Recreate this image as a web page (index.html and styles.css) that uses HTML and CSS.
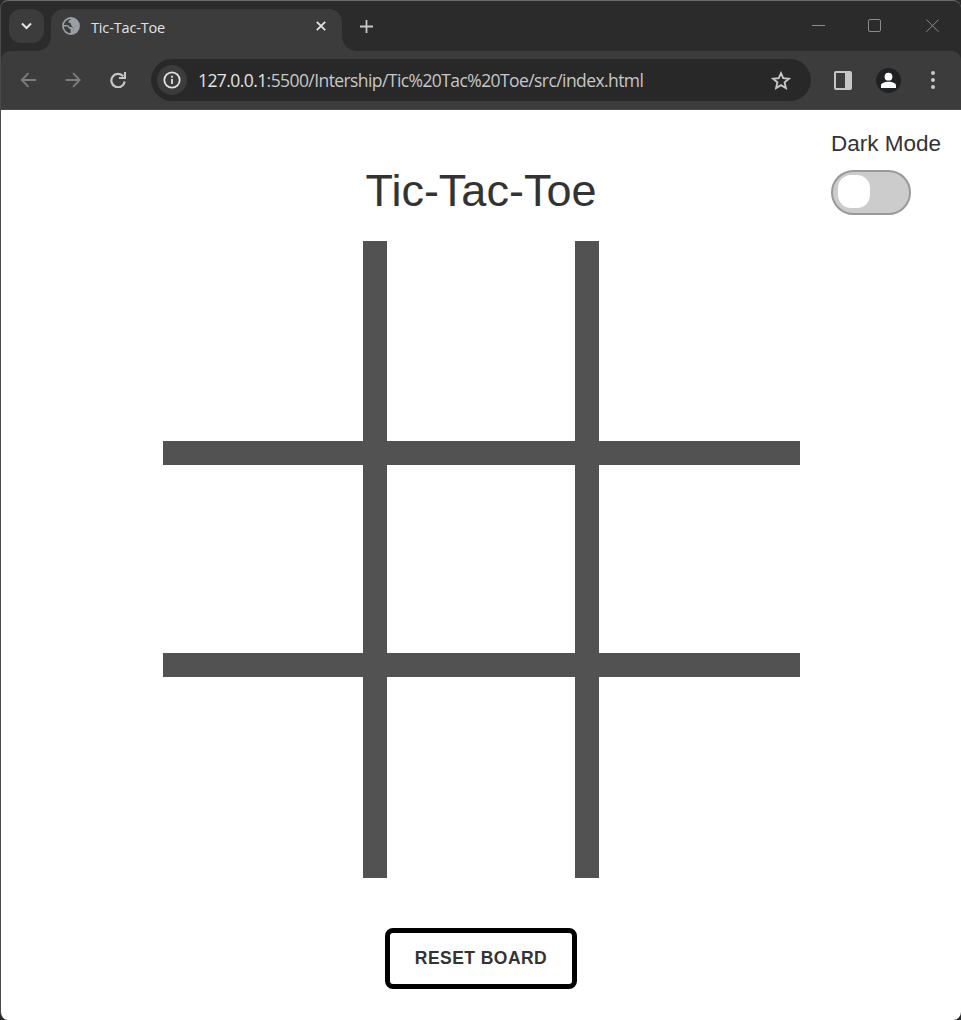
FILE: index.html
```html
<!DOCTYPE html>
<html lang="en">
<head>
<meta charset="utf-8">
<title>Tic-Tac-Toe</title>
<link rel="stylesheet" href="styles.css">
</head>
<body>
<div class="window">
  <header class="tabs">
    <button class="tab-search" aria-label="Search tabs"><svg width="11" height="8" viewBox="0 0 11 8"><path d="M1 1.500 5.500 6 10 1.500" fill="none" stroke="#e3e3e3" stroke-width="2"/></svg></button>
    <div class="tab">
      <svg class="globe" width="18" height="18" viewBox="0 0 18 18"><circle cx="9" cy="9" r="8.900" fill="#9aa0a6"/><path d="M10 2C7.500 2.300 6 3.800 6.500 5.800c1.300 0 2.500.2 2.700 2.200.4 2 2.300 2.700 4.300 1.700h2.600c-.1 3.500-2.600 6-5.800 6.400v-1.900c1.300-.4 2-1.500 1.300-2.700-.7-1.200-2-1.400-4-1.400-.3-1.300-1.100-2-2.700-2H2C2.300 4.200 5.700 1.500 10 2Z" fill="#3c3c3c"/><path d="M10.500 9.500h6v3.200l-4 3.500-3 .2v-2c2-.3 2.800-1.700 2-3Z" fill="#9aa0a6"/><path d="M1.900 9.500h4c.2 1.700 1 2.300 2.700 2.600v4C5 15.900 2 13.200 1.900 9.500Z" fill="#3c3c3c"/></svg>
      <span class="tab-title">Tic-Tac-Toe</span>
      <svg class="tab-close" width="10" height="10" viewBox="0 0 10 10"><path d="m.8.8 8.400 8.400M9.200.8.8 9.200" stroke="#e3e3e3" stroke-width="1.800"/></svg>
    </div>
    <svg class="plus" width="13" height="13" viewBox="0 0 13 13"><path d="M6.500 0v13M0 6.500h13" stroke="#c7c7c7" stroke-width="1.800"/></svg>
    <div class="controls">
      <svg width="13" height="14" viewBox="0 0 13 14"><path d="M0 6.500h13" stroke="#8b8b8b"/></svg>
      <svg width="13" height="14" viewBox="0 0 13 14"><rect x=".5" y=".5" width="12" height="12" rx="1.500" fill="none" stroke="#8b8b8b"/></svg>
      <svg width="13" height="14" viewBox="0 0 13 14"><path d="m.3.500 12.400 12.400m0-12.400L.3 12.900" stroke="#8b8b8b"/></svg>
    </div>
  </header>
  <nav class="toolbar">
    <svg class="back" width="16" height="16" viewBox="0 0 16 16"><path d="M16 8H2.300M8.500 1.200 1.800 8l6.700 6.800" fill="none" stroke="#7d7d7d" stroke-width="1.800"/></svg>
    <svg class="forward" width="16" height="16" viewBox="0 0 16 16"><path d="M.5 8h13.700M8 1.200 14.700 8 8 14.800" fill="none" stroke="#7d7d7d" stroke-width="1.800"/></svg>
    <svg class="reload" width="16" height="16" viewBox="0 0 16 16"><path d="M13.200 4.200A6.700 6.700 0 1 0 14.700 9.500" fill="none" stroke="#c7c7c7" stroke-width="2.200"/><path d="M16 0v7H9V5h5V0Z" fill="#c7c7c7"/></svg>
    <div class="address">
      <span class="info"><svg width="18" height="18" viewBox="0 0 18 18"><circle cx="9" cy="9" r="7.700" fill="none" stroke="#e3e3e3" stroke-width="1.800"/><path d="M9 8v5M9 4.800v2" stroke="#e3e3e3" stroke-width="1.800"/></svg></span>
      <span class="url"><b>127.0.0.1</b>:5500/Intership/Tic%20Tac%20Toe/src/index.html</span>
      <svg class="star" width="20" height="19" viewBox="0 0 20 19"><path d="m10 2.200 2.200 5 5.700.5-4.300 3.700 1.300 5.600-4.900-2.900L5.100 17l1.300-5.600-4.300-3.700 5.700-.5Z" fill="none" stroke="#c7c7c7" stroke-width="1.900"/></svg>
    </div>
    <svg class="panel" width="18" height="19" viewBox="0 0 18 19"><path fill-rule="evenodd" d="M2 0h14q2 0 2 2v15q0 2-2 2H2q-2 0-2-2V2Q0 0 2 0Zm0 2v15h9V2Z" fill="#c7c7c7"/></svg>
    <svg class="profile" width="25" height="25" viewBox="0 0 25 25"><circle cx="12.500" cy="12.500" r="12.500" fill="#202124"/><circle cx="12.500" cy="8.700" r="3.900" fill="#fff"/><path d="M5 20v-2.500c0-2.600 4.200-3.700 7.500-3.700s7.500 1.100 7.500 3.700V20Z" fill="#fff"/></svg>
    <svg class="dots" width="4" height="18" viewBox="0 0 4 18"><g fill="#c7c7c7"><circle cx="2" cy="2" r="2"/><circle cx="2" cy="9" r="2"/><circle cx="2" cy="16" r="2"/></g></svg>
  </nav>
  <main class="page">
    <div class="mode">
      <span class="mode-label">Dark Mode</span>
      <div class="switch" role="switch" aria-checked="false"><span class="knob"></span></div>
    </div>
    <h1 class="title">Tic-Tac-Toe</h1>
    <div class="board">
      <i></i><i></i><i></i><i></i><i></i><i></i><i></i><i></i><i></i>
    </div>
    <button class="reset">RESET BOARD</button>
  </main>
</div>
</body>
</html>
```
FILE: styles.css
```css
* { box-sizing: border-box; }
body { margin: 0; background: #292929; }
svg { display: block; flex: none; }
button { padding: 0; font: inherit; }
.window {
  width: 961px;
  height: 1020px;
  display: flex;
  flex-direction: column;
  overflow: hidden;
  border-top: 1px solid #696b6b;
  border-left: 1px solid #4a4a4d;
  border-radius: 8px;
  background: #2b2b2b;
  font-family: "Open Sans", "Noto Sans", sans-serif;
}
.tabs { height: 50px; flex: none; display: flex; padding: 8px 22px 0 8px; }
.tab-search {
  width: 35px;
  height: 34px;
  display: grid;
  place-items: center;
  border: 0;
  border-radius: 12px;
  background: #3c3c3c;
}
.tab {
  position: relative;
  width: 291px;
  margin-left: 7px;
  padding: 0 16px 8px 11px;
  display: flex;
  align-items: center;
  border-radius: 13px 13px 0 0;
  background: #3c3c3c;
}
.tab::before, .tab::after {
  content: "";
  position: absolute;
  bottom: 0;
  width: 14px;
  height: 14px;
}
.tab::before { right: 100%; background: radial-gradient(circle at 0 0, transparent 13.500px, #3c3c3c 14px); }
.tab::after { left: 100%; background: radial-gradient(circle at 100% 0, transparent 13.500px, #3c3c3c 14px); }
.tab-title { margin: 2px 0 0 11px; color: #e3e3e3; font-size: 14.500px; letter-spacing: -.15px; }
.tab-close { margin-left: auto; }
.plus { margin: 11px 0 0 18px; }
.controls { display: flex; gap: 43px; margin: 10px 0 0 auto; }
.controls svg:last-child { margin-left: 2px; }
.toolbar {
  height: 59px;
  flex: none;
  display: flex;
  align-items: center;
  padding: 0 0 0 19px;
  border-bottom: 1px solid #4b4b4b;
  border-radius: 9px 9px 0 0;
  background: #3c3c3c;
}
.forward { margin-left: 29px; }
.reload { margin-left: 29px; }
.address {
  width: 660px;
  height: 42px;
  flex: none;
  margin-left: 25px;
  padding: 0 20px 0 6px;
  display: flex;
  align-items: center;
  border-radius: 21px;
  background: #282828;
}
.info { width: 30px; height: 30px; display: grid; place-items: center; border-radius: 50%; background: #3c3c3c; }
.url { margin-left: 11px; white-space: nowrap; color: #c7c7c7; font-size: 17.500px; letter-spacing: -.58px; }
.url b { color: #e3e3e3; font-weight: 400; }
.star { margin-left: auto; }
.panel { margin-left: 23px; }
.profile { margin-left: 24px; }
.dots { margin-left: 30px; }
.page {
  position: relative;
  flex: 1;
  display: flex;
  flex-direction: column;
  align-items: center;
  padding-top: 55px;
  background: #fff;
  color: #333;
  font-family: "Liberation Sans", Arial, sans-serif;
}
.mode { position: absolute; top: 20px; right: 20px; }
.mode-label { display: block; font-size: 22.500px; line-height: 28px; }
.switch {
  width: 80px;
  height: 45px;
  margin-top: 12px;
  padding: 3px 5px;
  border: 2px solid #999;
  border-radius: 23px;
  background: #ccc;
}
.knob { display: block; width: 32px; height: 33px; border-radius: 13px; background: #fff; }
.title { margin: 0; font-size: 45px; font-weight: 400; line-height: 52px; }
.board {
  width: 637px;
  height: 637px;
  flex: none;
  margin-top: 24px;
  margin-left: 1px;
  display: grid;
  grid-template: 200px 188px 201px / 200px 188px 201px;
  gap: 24px;
  background: #525252;
}
.board i { background: #fff; }
.reset {
  width: 192px;
  height: 61px;
  margin-top: 50px;
  border: 5px solid #000;
  border-radius: 8px;
  background: #fff;
  color: #333;
  font-size: 17.500px;
  font-weight: 700;
  letter-spacing: .45px;
}
```
